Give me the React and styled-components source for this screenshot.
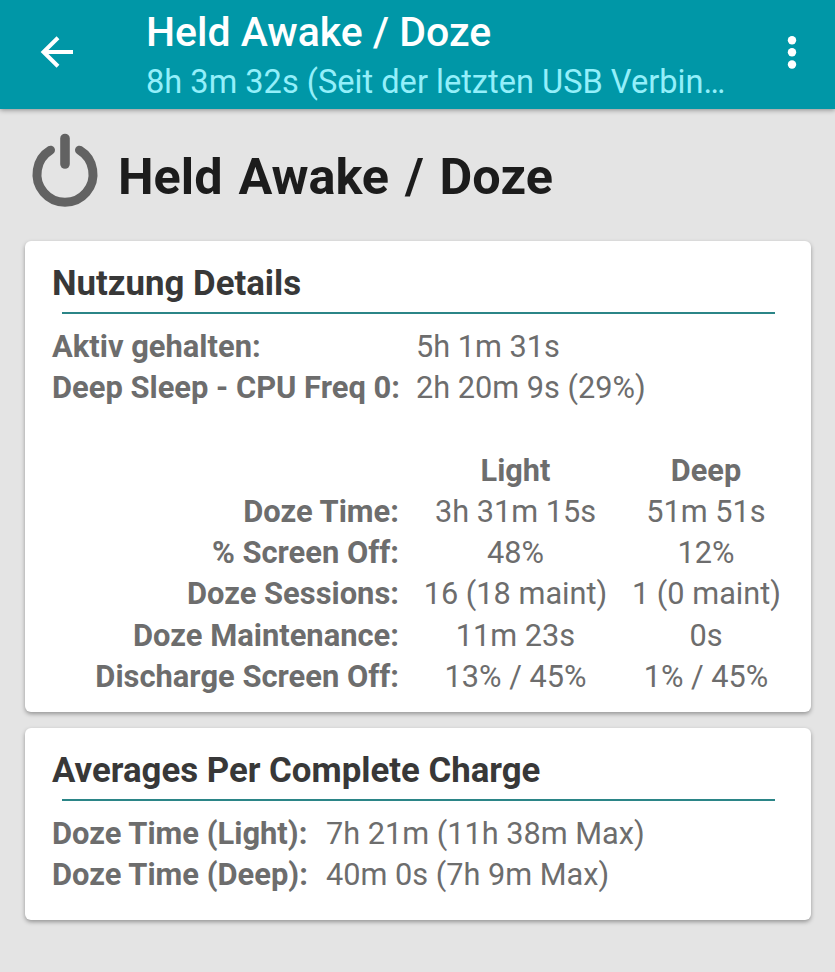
import React from "react";
import styled, { createGlobalStyle } from "styled-components";

const GlobalStyle = createGlobalStyle`
  * {
    box-sizing: border-box;
  }
  body {
    margin: 0;
    background: #e4e4e4;
    font-family: Roboto, sans-serif;
  }
`;
const Wrapper = styled.main`
  width: 835px;
  height: 972px;
  overflow: hidden;
  background: #e4e4e4;
`;
const Toolbar = styled.header`
  height: 109px;
  padding: 0 35px 0 39px;
  display: flex;
  align-items: flex-start;
  background: #0097a7;
  color: #fff;
  box-shadow: 0 1px 5px rgba(0, 0, 0, 0.4);
`;
const IconButton = styled.button`
  padding: 0;
  margin-top: 34px;
  border: none;
  background: none;
  color: #fff;
  line-height: 0;
`;
const Titles = styled.div`
  flex: 1;
  padding: 8px 0 0 71px;
  white-space: nowrap;
`;
const Title = styled.div`
  font-size: 41px;
  font-weight: 500;
  line-height: 49px;
`;
const Subtitle = styled.div`
  font-size: 32.6px;
  line-height: 50px;
  color: #93effa;
`;
const Heading = styled.section`
  height: 132px;
  padding: 21px 0 0 29px;
  display: flex;
  align-items: flex-start;
`;
const HeadingText = styled.h1`
  margin: 17px 0 0 17px;
  font-size: 50.4px;
  line-height: 60px;
  font-weight: 700;
  word-spacing: 3.4px;
  color: #1c1c1c;
`;
const Card = styled.section`
  height: ${(props) => props.$height}px;
  margin: 0 24px 16px 25px;
  padding: 20px 27px 0;
  background: #fff;
  border-radius: 6px;
  box-shadow: 0 2px 4px rgba(0, 0, 0, 0.35);
`;
const CardTitle = styled.h2`
  margin: 0;
  height: 51px;
  font-size: 34.8px;
  line-height: 44px;
  font-weight: 700;
  color: #383838;
`;
const Divider = styled.div`
  height: 2px;
  margin: 0 9px 12px 10px;
  background: #2b8587;
`;
const Row = styled.div`
  display: grid;
  grid-template-columns: ${(props) => props.$label}px 1fr;
  font-size: 30.7px;
  line-height: 41.3px;
  color: #6d6d6d;
  white-space: nowrap;
`;
const Label = styled.span`
  font-size: 30.9px;
  font-weight: 700;
  text-align: ${(props) => (props.$right ? "right" : "left")};
`;
const Value = styled.span``;
const DozeTable = styled.div`
  margin-top: 41px;
  display: grid;
  grid-template-columns: 347px 207px 148px;
  column-gap: 13px;
  font-size: 30.7px;
  line-height: 41.3px;
  color: #6d6d6d;
  white-space: nowrap;
`;
const Cell = styled.span`
  text-align: center;
`;
const ColumnTitle = styled(Cell)`
  font-weight: 700;
`;

const dozeRows = [
  ["Doze Time:", "3h 31m 15s", "51m 51s"],
  ["% Screen Off:", "48%", "12%"],
  ["Doze Sessions:", "16 (18 maint)", "1 (0 maint)"],
  ["Doze Maintenance:", "11m 23s", "0s"],
  ["Discharge Screen Off:", "13% / 45%", "1% / 45%"],
];

const BackIcon = () => (
  <svg width="36" height="36" viewBox="0 0 36 36" fill="none">
    <path d="M34 18H5M19 3.8L4.5 18L19 32.2" stroke="#fff" strokeWidth="4" />
  </svg>
);
const MoreIcon = () => (
  <svg width="16" height="36" viewBox="0 0 16 36" fill="#fff">
    <circle cx="8" cy="6.2" r="4.2" />
    <circle cx="8" cy="18.2" r="4.2" />
    <circle cx="8" cy="30.5" r="4.2" />
  </svg>
);
const PowerIcon = () => (
  <svg
    width="72"
    height="80"
    viewBox="0 0 72 80"
    fill="none"
    stroke="#626262"
    strokeLinecap="round"
  >
    <path d="M21.5 20.2A28 28 0 1 0 50.5 20.2" strokeWidth="9" />
    <path d="M36 8.5V34" strokeWidth="9.6" />
  </svg>
);

export default function App() {
  return (
    <Wrapper>
      <GlobalStyle />
      <Toolbar>
        <IconButton aria-label="Back">
          <BackIcon />
        </IconButton>
        <Titles>
          <Title>Held Awake / Doze</Title>
          <Subtitle>8h 3m 32s (Seit der letzten USB Verbin…</Subtitle>
        </Titles>
        <IconButton aria-label="More">
          <MoreIcon />
        </IconButton>
      </Toolbar>
      <Heading>
        <PowerIcon />
        <HeadingText>Held Awake / Doze</HeadingText>
      </Heading>
      <Card $height={471}>
        <CardTitle>Nutzung Details</CardTitle>
        <Divider />
        <Row $label={364}>
          <Label>Aktiv gehalten:</Label>
          <Value>5h 1m 31s</Value>
        </Row>
        <Row $label={364}>
          <Label>Deep Sleep - CPU Freq 0:</Label>
          <Value>2h 20m 9s (29%)</Value>
        </Row>
        <DozeTable>
          <span />
          <ColumnTitle>Light</ColumnTitle>
          <ColumnTitle>Deep</ColumnTitle>
          {dozeRows.map(([label, light, deep]) => (
            <React.Fragment key={label}>
              <Label $right>{label}</Label>
              <Cell>{light}</Cell>
              <Cell>{deep}</Cell>
            </React.Fragment>
          ))}
        </DozeTable>
      </Card>
      <Card $height={192}>
        <CardTitle>Averages Per Complete Charge</CardTitle>
        <Divider />
        <Row $label={274}>
          <Label>Doze Time (Light):</Label>
          <Value>7h 21m (11h 38m Max)</Value>
        </Row>
        <Row $label={274}>
          <Label>Doze Time (Deep):</Label>
          <Value>40m 0s (7h 9m Max)</Value>
        </Row>
      </Card>
    </Wrapper>
  );
}
